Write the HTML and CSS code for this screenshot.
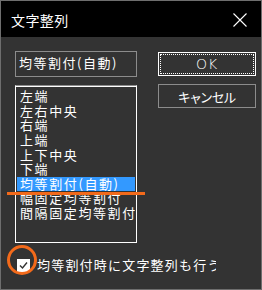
FILE: index.html
```html
<!DOCTYPE html>
<html lang="ja">
<head>
<meta charset="utf-8">
<title>文字整列</title>
<link rel="stylesheet" href="styles.css">
</head>
<body>
<div class="window">
  <div class="titlebar">
    <span class="title">文字整列</span>
    <svg class="close" width="14" height="14" viewBox="0 0 14 14"><path d="M0.5 0.5 L13.5 13.5 M13.5 0.5 L0.5 13.5" stroke="#fff" stroke-width="1.1" fill="none"/></svg>
  </div>
  <div class="content">
    <div class="left">
      <div class="textbox">均等割付(自動)</div>
      <ul class="listbox">
        <li class="item">左端</li>
        <li class="item">左右中央</li>
        <li class="item">右端</li>
        <li class="item">上端</li>
        <li class="item">上下中央</li>
        <li class="item">下端</li>
        <li class="item selected">均等割付(自動)</li>
        <li class="item">幅固定均等割付</li>
        <li class="item">間隔固定均等割付</li>
      </ul>
    </div>
    <div class="right">
      <button class="btn btn-ok">OK</button>
      <button class="btn btn-cancel">キャンセル</button>
    </div>
  </div>
  <div class="checkrow">
    <span class="checkbox">
      <svg width="13" height="13" viewBox="0 0 13 13"><path d="M3 6.5 L5.5 9 L10 3.5" stroke="#333" stroke-width="1.4" fill="none"/></svg>
    </span>
    <span class="checklabel">均等割付時に文字整列も行う</span>
  </div>
  <div class="mark-line"></div>
  <div class="mark-circle"></div>
</div>
</body>
</html>
```
FILE: styles.css
```css
* { box-sizing: border-box; }
html, body { margin: 0; padding: 0; background: #333; }
body {
  font-family: "Noto Sans CJK JP", "Noto Sans", sans-serif;
  color: #fff;
}
.window {
  position: relative;
  width: 262px;
  height: 290px;
  border: 1px solid #6e6e6e;
  background: #333;
  overflow: hidden;
}
.titlebar {
  height: 36px;
  background: #000;
  display: flex;
  align-items: center;
  justify-content: space-between;
  padding: 0 14px 0 10px;
}
.title {
  font-size: 14px;
  letter-spacing: 0.4px;
  line-height: 16px;
  margin-top: 1px;
}
.close { display: block; margin-top: 1px; }
.content {
  display: grid;
  grid-template-columns: 122px 98px;
  column-gap: 21px;
  padding: 14px 0 0 14px;
}
.left { display: flex; flex-direction: column; gap: 8px; }
.textbox {
  height: 26px;
  border: 1px solid #8c8c8c;
  padding-left: 3px;
  font-size: 13px;
  letter-spacing: 1.5px;
  line-height: 22px;
  white-space: nowrap;
  overflow: hidden;
}
.listbox {
  list-style: none;
  margin: 0;
  height: 158px;
  border: 1px solid #fff;
  border-top-color: #8c8c8c;
  box-shadow: inset 0 1px 0 #fff;
  padding: 3px 1px 0 1px;
  overflow: hidden;
}
.item {
  height: 14.65px;
  line-height: 14.65px;
  font-size: 13px;
  letter-spacing: 1.6px;
  padding-left: 3px;
  white-space: nowrap;
  overflow: hidden;
}
.item.selected { background: #3399ff; }
.right {
  display: flex;
  flex-direction: column;
  gap: 8px;
  padding-top: 1px;
}
.btn {
  position: relative;
  height: 24px;
  background: #333;
  color: #fff;
  font-family: "Noto Sans CJK JP", "Noto Sans", sans-serif;
  font-weight: 400;
  padding: 0;
  margin: 0;
  display: flex;
  align-items: center;
  justify-content: center;
}
.btn-ok {
  border: 1px solid #fff;
  font-family: "DejaVu Sans", "Noto Sans", sans-serif;
  font-weight: 200;
  font-size: 14px;
  letter-spacing: 1px;
}
.btn-ok::after {
  content: "";
  position: absolute;
  inset: 1px;
  border: 1px dotted #fff;
}
.btn-cancel {
  border: 1px solid #8c8c8c;
  font-size: 13px;
  font-feature-settings: "palt";
  letter-spacing: -0.3px;
}
.checkrow {
  display: flex;
  align-items: center;
  padding: 10px 0 0 16px;
  height: 24px;
}
.checkbox {
  width: 13px;
  height: 13px;
  background: #fff;
  display: block;
  flex: none;
  margin-top: 10px;
}
.checkbox svg { display: block; }
.checklabel {
  margin-left: 7px;
  margin-top: 10px;
  width: 179px;
  font-size: 13px;
  letter-spacing: 1.2px;
  line-height: 14px;
  white-space: nowrap;
  overflow: hidden;
}
.mark-line {
  position: absolute;
  left: 6px;
  top: 191px;
  width: 138px;
  height: 3px;
  background: #f26a1b;
}
.mark-circle {
  position: absolute;
  left: 6px;
  top: 244px;
  width: 30px;
  height: 30px;
  border: 3px solid #f26a1b;
  border-radius: 50%;
}
```
